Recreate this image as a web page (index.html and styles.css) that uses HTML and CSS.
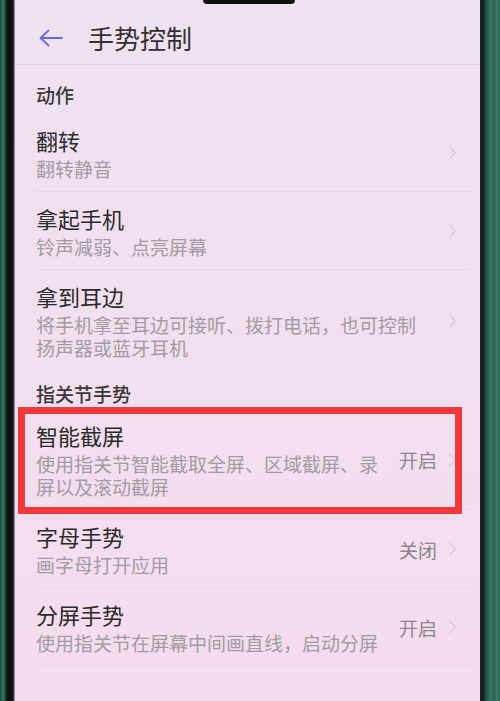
FILE: index.html
```html
<!DOCTYPE html>
<html lang="zh-CN">
<head>
<meta charset="utf-8">
<title>手势控制</title>
<link rel="stylesheet" href="styles.css">
</head>
<body>
<div class="phone">
  <div class="bezel-left"></div>
  <div class="screen">
    <div class="notch"></div>
    <header class="topbar">
      <svg class="back" width="24" height="18" viewBox="0 0 24 18"><path d="M23 9H1.5M9.5 1.5L1.5 9L9.5 16.5" fill="none" stroke="#6d68d8" stroke-width="1.8" stroke-linecap="round" stroke-linejoin="round"/></svg>
      <h1 class="title">手势控制</h1>
    </header>

    <div class="section-title">动作</div>
    <div class="row">
      <div class="text"><div class="row-title">翻转</div><div class="row-sub">翻转静音</div></div>
      <svg class="chev" width="9" height="14" viewBox="0 0 9 14"><path d="M1.5 1L7.5 7L1.5 13" fill="none" stroke="#d9cbd7" stroke-width="1.5"/></svg>
    </div>
    <div class="row">
      <div class="text"><div class="row-title">拿起手机</div><div class="row-sub">铃声减弱、点亮屏幕</div></div>
      <svg class="chev" width="9" height="14" viewBox="0 0 9 14"><path d="M1.5 1L7.5 7L1.5 13" fill="none" stroke="#d9cbd7" stroke-width="1.5"/></svg>
    </div>
    <div class="row last">
      <div class="text"><div class="row-title">拿到耳边</div><div class="row-sub">将手机拿至耳边可接听、拨打电话，也可控制扬声器或蓝牙耳机</div></div>
      <svg class="chev" width="9" height="14" viewBox="0 0 9 14"><path d="M1.5 1L7.5 7L1.5 13" fill="none" stroke="#d9cbd7" stroke-width="1.5"/></svg>
    </div>

    <div class="section-title second">指关节手势</div>
    <div class="row highlighted">
      <div class="text"><div class="row-title">智能截屏</div><div class="row-sub">使用指关节智能截取全屏、区域截屏、录屏以及滚动截屏</div></div>
      <span class="status">开启</span>
      <svg class="chev" width="9" height="14" viewBox="0 0 9 14"><path d="M1.5 1L7.5 7L1.5 13" fill="none" stroke="#d9cbd7" stroke-width="1.5"/></svg>
      <div class="mark"></div>
    </div>
    <div class="row">
      <div class="text"><div class="row-title">字母手势</div><div class="row-sub">画字母打开应用</div></div>
      <span class="status">关闭</span>
      <svg class="chev" width="9" height="14" viewBox="0 0 9 14"><path d="M1.5 1L7.5 7L1.5 13" fill="none" stroke="#d9cbd7" stroke-width="1.5"/></svg>
    </div>
    <div class="row">
      <div class="text"><div class="row-title">分屏手势</div><div class="row-sub">使用指关节在屏幕中间画直线，启动分屏</div></div>
      <span class="status">开启</span>
      <svg class="chev" width="9" height="14" viewBox="0 0 9 14"><path d="M1.5 1L7.5 7L1.5 13" fill="none" stroke="#d9cbd7" stroke-width="1.5"/></svg>
    </div>
  </div>
  <div class="bezel-right"></div>
</div>
</body>
</html>
```

FILE: styles.css
```css
html, body {
  margin: 0;
  padding: 0;
  width: 500px;
  height: 701px;
  overflow: hidden;
  background: #0f1a18;
}

.phone {
  display: flex;
  width: 500px;
  height: 701px;
  font-family: "Noto Sans CJK SC", "Noto Sans", sans-serif;
}

.bezel-left {
  width: 15px;
  flex: none;
  background: linear-gradient(to right, #1d4a40 0px, #3a7868 3px, #24564a 5px, #0c1412 7px, #0a100f 12px, #3a3a40 14px, #e8dbe8 15px);
}

.bezel-right {
  width: 20px;
  flex: none;
  background: linear-gradient(to right, #1b2524 0px, #111918 3px, #1f4038 5px, #2c5f52 8px, #3b7a69 11px, #2a5c50 14px, #3d7d6c 17px, #2b5d50 20px);
}

.screen {
  position: relative;
  flex: 1;
  background: linear-gradient(to bottom, #efe2f0 0%, #f1e0ef 40%, #f5dcee 100%);
  color: #2b2a2c;
}

.notch {
  position: absolute;
  top: 0;
  left: 188px;
  width: 92px;
  height: 4px;
  background: #111;
  border-radius: 0 0 9px 9px;
}

.topbar {
  display: flex;
  align-items: center;
  box-sizing: border-box;
  height: 65px;
  padding: 12px 0 0 24px;
  border-bottom: 1px solid #e2d0e0;
}

.back {
  flex: none;
}

.title {
  margin: 0 0 0 25px;
  font-size: 26px;
  line-height: 30px;
  font-weight: 400;
  color: #333033;
}

.section-title {
  padding: 20px 0 9px 21px;
  font-size: 19px;
  line-height: 20px;
  font-weight: 500;
  color: #3a373a;
}

.section-title.second {
  padding-top: 13px;
  padding-bottom: 5px;
}

.row {
  position: relative;
  display: flex;
  align-items: center;
  margin: 0 10px 0 21px;
  padding: 12px 13px 11px 0;
  border-bottom: 1px solid #e8d6e6;
}

.row.last {
  border-bottom: none;
  padding-bottom: 12px;
}

.text {
  flex: 1;
  min-width: 0;
  margin-right: 16px;
}

.row-title {
  font-size: 22px;
  line-height: 28px;
  color: #2b2a2c;
  margin-bottom: 3px;
}

.row-sub {
  font-size: 19px;
  line-height: 23px;
  color: #a39ba3;
}

.status {
  flex: none;
  font-size: 19px;
  line-height: 23px;
  color: #8b858b;
  margin-right: 11px;
}

.chev {
  flex: none;
}

.mark {
  position: absolute;
  top: -2px;
  left: -18px;
  right: 8px;
  bottom: -5px;
  border: 7px solid #f2373d;
  pointer-events: none;
}
```
